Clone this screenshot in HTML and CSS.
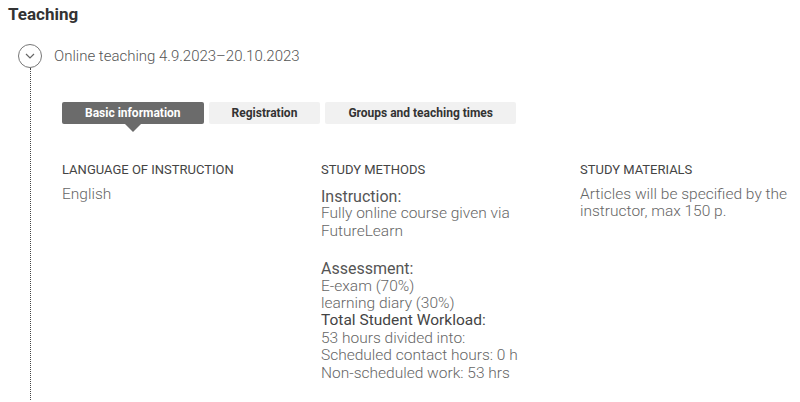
FILE: index.html
```html
<!DOCTYPE html>
<html lang="en">
<head>
    <meta charset="UTF-8">
    <meta name="viewport" content="width=device-width, initial-scale=1.0">
    <title>Teaching</title>
    <link rel="stylesheet" href="styles.css">
</head>
<body>
    <h2 class="section-title">Teaching</h2>

    <div class="realisation">
        <div class="realisation-header">
            <span class="toggle">
                <svg width="10" height="6" viewBox="0 0 10 6"><path d="M1 1l4 4 4-4" fill="none" stroke="#666" stroke-width="1.2"/></svg>
            </span>
            <span class="realisation-name">Online teaching 4.9.2023–20.10.2023</span>
        </div>

        <div class="realisation-body">
            <div class="tabs">
                <div class="tab active">Basic information</div>
                <div class="tab">Registration</div>
                <div class="tab">Groups and teaching times</div>
            </div>

            <div class="info-grid">
                <div class="info">
                    <div class="info-label">Language of instruction</div>
                    <div class="info-text">English</div>
                </div>
                <div class="info">
                    <div class="info-label">Study methods</div>
                    <div class="info-text methods">
                        <p>
                            <span class="sub">Instruction:</span>
                            Fully online course given via FutureLearn
                        </p>
                        <p>
                            <span class="sub">Assessment:</span>
                            E-exam (70%)<br>
                            learning diary (30%)<br>
                            <span class="strong">Total Student Workload:</span><br>
                            53 hours divided into:<br>
                            Scheduled contact hours: 0 h<br>
                            Non-scheduled work: 53 hrs
                        </p>
                    </div>
                </div>
                <div class="info">
                    <div class="info-label">Study materials</div>
                    <div class="info-text">Articles will be specified by the instructor, max 150 p.</div>
                </div>
            </div>
        </div>
    </div>
</body>
</html>
```

FILE: styles.css
```css
body {
    margin: 0;
    padding: 0 0 0 8px;
    font-family: Roboto, "Liberation Sans", sans-serif;
    font-weight: 300;
    color: #666;
    background: #fff;
}

.section-title {
    margin: 0;
    padding-top: 4px;
    font-size: 17px;
    font-weight: 700;
    line-height: 20px;
    color: #333;
}

.realisation-header {
    display: flex;
    align-items: center;
    margin-top: 20px;
    padding-left: 10px;
}

.toggle {
    display: flex;
    justify-content: center;
    align-items: center;
    width: 22px;
    height: 22px;
    border: 1.3px solid #777;
    border-radius: 50%;
}

.realisation-name {
    margin-left: 12px;
    font-size: 15px;
    color: #555;
}

.realisation-body {
    margin-left: 22px;
    padding: 34px 0 18px 31px;
    border-left: 1px dotted #444;
}

.tabs {
    display: flex;
    gap: 5px;
}

.tab {
    position: relative;
    height: 22px;
    line-height: 22px;
    padding: 0 23px;
    font-size: 12px;
    font-weight: 700;
    color: #333;
    background: #f1f1f1;
    border-radius: 2px;
}

.tab.active {
    color: #fff;
    background: #6b6b6b;
}

.tab.active::after {
    content: "";
    position: absolute;
    left: 50%;
    top: 22px;
    margin-left: -8px;
    border: 8px solid transparent;
    border-top-color: #6b6b6b;
    border-bottom: 0;
}

.info-grid {
    display: grid;
    grid-template-columns: 259px 259px 1fr;
    margin-top: 38px;
}

.info-label {
    font-size: 13px;
    font-weight: 400;
    color: #444;
    text-transform: uppercase;
    line-height: 16px;
}

.info-text {
    margin-top: 8px;
    font-size: 15.5px;
    line-height: 17.4px;
}

.methods {
    padding-top: 2px;
}

.info-text p {
    margin: 0 0 20px;
}

.info-text p:last-child {
    margin-bottom: 0;
}

.sub {
    display: block;
    font-size: 16px;
    font-weight: 400;
    color: #555;
}

.strong {
    font-weight: 400;
    color: #444;
}
```
